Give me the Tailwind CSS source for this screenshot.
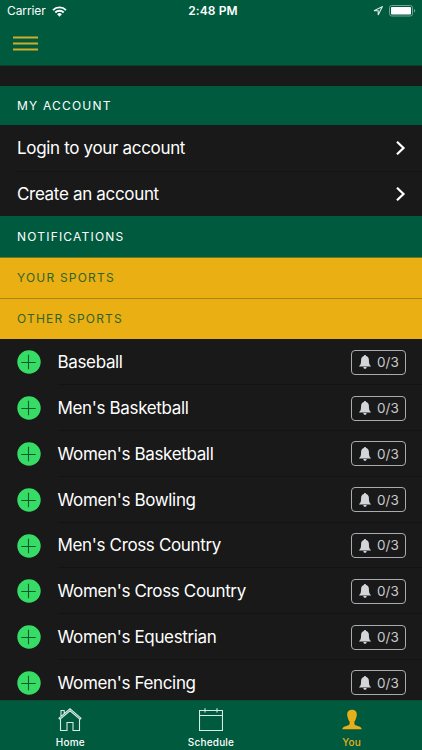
<!DOCTYPE html>
<html lang="en">
<head>
<meta charset="utf-8">
<title>You</title>
<script src="https://cdn.jsdelivr.net/npm/@tailwindcss/browser@4"></script>
</head>
<body class="w-[422px] h-[750px] overflow-hidden bg-[#191919] font-['Inter','Liberation_Sans',sans-serif] text-white">
<svg class="hidden">
  <symbol id="plus" viewBox="0 0 24 24"><circle cx="12" cy="12" r="11.7" fill="#37dc67"/><path d="M11.500 4.800v14.400M4.300 12.500h14.400" stroke="#0b5a2c" stroke-width="1.1"/></symbol>
  <symbol id="bell" viewBox="0 0 12 14"><path d="M6 0c-.7 0-1 .4-1.100 1C3 1.500 2.100 3 2.100 5c0 3.500-.6 4.900-2 6.100v.5h11.800v-.5C10.500 9.900 9.900 8.500 9.900 5c0-2-.9-3.500-2.800-4C7 .4 6.700 0 6 0zM4.300 12h3.400c-.2 1.300-.8 1.800-1.700 1.800s-1.500-.5-1.700-1.800z" fill="#d3d5d8"/></symbol>
  <symbol id="chev" viewBox="0 0 10 14"><path d="M1.800 1.500 7.500 7l-5.700 5.500" fill="none" stroke="#fff" stroke-width="2.200" stroke-linecap="square"/></symbol>
</svg>
<div class="flex h-full flex-col">
  <header class="h-[66px] shrink-0 border-b border-[#0d3d2b] bg-[#005a3e]">
    <div class="grid h-[22px] grid-cols-3 items-center pl-[7px] pr-[6px] text-[12px]">
      <div class="flex items-center gap-[6px]"><span class="tracking-[-0.1px]">Carrier</span>
        <svg class="h-[11px] w-[15px]" viewBox="0 0 15 11"><g fill="none" stroke="#fff" stroke-width="1.900"><path d="M1 4.100a9.200 9.200 0 0 1 13 0"/><path d="M3.300 6.500a6 6 0 0 1 8.400 0"/></g><path d="M7.500 10.700 5.100 8.300a3.400 3.400 0 0 1 4.800 0z" fill="#fff"/></svg>
      </div>
      <div class="whitespace-nowrap pl-[3px] text-center font-semibold tracking-[0.1px]">2:48 PM</div>
      <div class="flex items-center justify-end gap-[6px]">
        <svg class="h-[10px] w-[10px]" viewBox="0 0 10 10"><path d="M9.200.8 1 4.700h4.200v4.200z" fill="none" stroke="#d8ebe3" stroke-width="1.100"/></svg>
        <svg class="h-[12px] w-[27px]" viewBox="0 0 27 12"><rect x=".5" y=".5" width="23" height="10.500" rx="2.200" fill="none" stroke="#72a593"/><rect x="2" y="2" width="20" height="7.500" rx=".8" fill="#fff"/><path d="M25 4v3.600q1.200-.5 1.200-1.800T25 4z" fill="#72a593"/></svg>
      </div>
    </div>
    <svg class="ml-[13px] mt-[14px] h-[16px] w-[25px]" viewBox="0 0 25 16"><path d="M0 1.500h25M0 7.500h25M0 13.500h25" stroke="#d0ad27" stroke-width="2"/></svg>
  </header>
  <div class="h-[20px] shrink-0"></div>
  <h2 class="flex h-[39px] shrink-0 items-center bg-[#005a3e] pl-[17px] text-[12px] tracking-[1.200px]">MY ACCOUNT</h2>
  <div class="flex h-[46px] shrink-0 items-center justify-between pl-[17px] pr-[16px] text-[17px] tracking-[-0.33px]"><span class="pt-[2px]">Login to your account</span><svg class="h-[14px] w-[10px]"><use href="#chev"/></svg></div>
  <div class="ml-[17px] flex h-[45px] shrink-0 items-center justify-between border-t border-[#131313] pr-[16px] text-[17px] tracking-[-0.33px]"><span class="pt-[2px]">Create an account</span><svg class="h-[14px] w-[10px]"><use href="#chev"/></svg></div>
  <h2 class="flex h-[41px] shrink-0 items-center bg-[#005a3e] pl-[17px] text-[12px] tracking-[1.200px]">NOTIFICATIONS</h2>
  <h2 class="flex h-[41px] shrink-0 items-center border-t border-[#68791f] bg-[#eaaf12] pl-[17px] text-[12px] tracking-[1.200px] text-[#2e6428]">YOUR SPORTS</h2>
  <h2 class="flex h-[41px] shrink-0 items-center border-t border-[#a88320] bg-[#eaaf12] pl-[17px] text-[12px] tracking-[1.200px] text-[#2e6428]">OTHER SPORTS</h2>
  <main id="sports" class="min-h-0 flex-1 overflow-hidden pt-[0.5px]"></main>
  <nav class="grid h-[50px] shrink-0 grid-cols-3 border-t border-[#0d4a34] bg-[#005a3e] text-[10px] font-medium">
    <div class="flex flex-col items-center pt-[7px]">
      <svg class="h-[24px] w-[24px]" viewBox="0 0 24 24" fill="none" stroke="#d8ebe3" stroke-width="1.100"><path d="M1 10.200 12 .8l11 9.400-1 1L12 2.800 2 11.200zM2.500 11v11.500h6.500v-8h6v8h6.500V11M3 8V2.500h3.200v3"/></svg>
      <span class="mt-[3px] leading-[14px] tracking-[0.200px]">Home</span>
    </div>
    <div class="flex flex-col items-center pt-[7px]">
      <svg class="h-[24px] w-[24px]" viewBox="0 0 24 24" fill="none" stroke="#d8ebe3" stroke-width="1.100"><path d="M.5 2.500h23v20H.5zM.5 7.500h23M6 .3v4.200M18 .3v4.200"/></svg>
      <span class="mt-[3px] leading-[14px] tracking-[0.200px]">Schedule</span>
    </div>
    <div class="flex flex-col items-center pt-[7px] text-[#e7b01b]">
      <svg class="h-[24px] w-[20px]" viewBox="0 0 20 24"><path d="M10 1.800c-3 0-4.800 1.700-4.800 4.500 0 1.300.1 2 .5 2.900.4 2 1 3.300 1.900 4.200v2.400c0 1-1 1.500-3.300 2.100C1.800 18.600.5 19.200.3 21.300h19.400c-.2-2.100-1.500-2.700-4-3.400-2.300-.6-3.300-1.100-3.300-2.100v-2.400c.9-.9 1.500-2.200 1.900-4.200.4-.9.5-1.600.5-2.900 0-2.800-1.800-4.500-4.800-4.500z" fill="currentColor"/></svg>
      <span class="mt-[3px] leading-[14px] tracking-[0.200px]">You</span>
    </div>
  </nav>
</div>
<script>
const sports = ["Baseball", "Men's Basketball", "Women's Basketball", "Women's Bowling", "Men's Cross Country", "Women's Cross Country", "Women's Equestrian", "Women's Fencing"];
document.getElementById("sports").innerHTML = sports.map(name => `
  <div class="flex h-[45.8px] items-center pl-[17px]">
    <svg class="h-[24px] w-[24px] shrink-0"><use href="#plus"/></svg>
    <div class="ml-[16.5px] flex h-full flex-1 items-center justify-between border-b border-[#131313] pr-[16px] pt-[1px]">
      <span class="pt-[1px] text-[17px] tracking-[-0.35px]">${name}</span>
      <span class="flex h-[25px] w-[55px] items-center rounded-[4px] border border-[#a9abae] pl-[7px] text-[13.5px] text-[#c8cacd]"><svg class="mr-[6px] h-[14px] w-[12px]"><use href="#bell"/></svg>0/3</span>
    </div>
  </div>`).join("");
</script>
</body>
</html>
